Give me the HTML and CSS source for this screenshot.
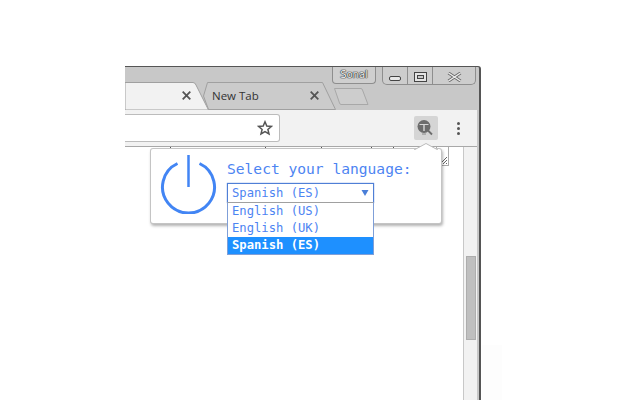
FILE: index.html
```html
<!DOCTYPE html>
<html lang="en">
<head>
<meta charset="utf-8">
<title>Select your language</title>
<link rel="stylesheet" href="styles.css">
</head>
<body>
<div class="patch"></div>
<div class="window">
  <div class="tabstrip">
    <svg class="tab-shapes" width="356" height="44" viewBox="0 0 356 44">
      <path class="tab-inactive" d="M78.500 30 L82.500 16.500 H197.500 L210.500 43.500 H83.500 Z"/>
      <path class="tab-active" d="M0 16.500 H68 Q70 16.500 71 19 L83.500 44 H0 Z"/>
      <path class="tab-new" d="M209.500 22.500 H236 Q237 22.500 237.500 24 L243 38.500 H216 Q215 38.500 214.500 37 Z"/>
    </svg>
    <div class="tab tab-first">
      <svg class="tab-close" width="9" height="9" viewBox="0 0 9 9"><path d="M.7 .7 L8.300 8.300 M8.300 .7 L.7 8.300"/></svg>
    </div>
    <div class="tab tab-second">
      <span class="tab-title">New Tab</span>
      <svg class="tab-close" width="9" height="9" viewBox="0 0 9 9"><path d="M.7 .7 L8.300 8.300 M8.300 .7 L.7 8.300"/></svg>
    </div>
    <div class="caption">
      <div class="profile">Sonal</div>
      <div class="controls">
        <div class="control">
          <svg width="14" height="6" viewBox="0 0 14 6"><rect x="1.500" y=".5" width="11" height="4" rx="1.500" fill="#e8e8e8" stroke="#444"/></svg>
        </div>
        <div class="control">
          <svg class="max-icon" width="13" height="10" viewBox="0 0 13 10"><rect x=".5" y=".5" width="12" height="9" fill="#e4e4e4" stroke="#444"/><rect x="3.500" y="3.500" width="6" height="3" fill="#c8c8c8" stroke="#444"/></svg>
        </div>
        <div class="control control-close">
          <svg width="15" height="10" viewBox="0 0 15 10"><path d="M1.500 1 L13.500 9 M13.500 1 L1.500 9" stroke="#666" stroke-width="3" fill="none"/><path d="M1.500 1 L13.500 9 M13.500 1 L1.500 9" stroke="#eee" stroke-width="1.500" fill="none"/></svg>
        </div>
      </div>
    </div>
  </div>
  <div class="toolbar">
    <div class="omnibox">
      <svg class="star" width="16" height="16" viewBox="0 0 16 16"><path d="M8 1.800 L9.800 6 L14.400 6.400 L10.900 9.400 L12 13.900 L8 11.500 L4 13.900 L5.100 9.400 L1.600 6.400 L6.200 6 Z"/></svg>
    </div>
    <div class="ext-button">
      <svg width="20" height="20" viewBox="0 0 20 20">
        <circle cx="8" cy="8.500" r="6.500" fill="#6c6c6c"/>
        <path d="M3.500 6 H12.500 V7 H8.700 V13 H7.300 V7 H3.500 Z" fill="#d6d6d6"/>
        <path d="M12 12.500 L16 16.500" stroke="#6c6c6c" stroke-width="1.800"/>
        <path d="M6 16 H10" stroke="#888" stroke-width="1"/>
      </svg>
    </div>
    <div class="menu-dots"><i></i><i></i><i></i></div>
  </div>
  <div class="page">
    <div class="ticks"><i></i><i></i><i></i><i></i><i></i></div>
    <div class="textarea-corner">
      <svg width="9" height="9" viewBox="0 0 9 9"><path d="M1 8 L8 1 M4 8 L8 4 M7 8 L8 7" stroke="#666" fill="none"/></svg>
    </div>
    <div class="scrollbar"><div class="thumb"></div></div>
  </div>
</div>
<div class="popup">
  <svg class="popup-arrow" width="24" height="7" viewBox="0 0 24 7"><path d="M0 7 L12 .5 L24 7" fill="#fff" stroke="#bbb"/></svg>
  <svg class="power" width="60" height="64" viewBox="0 0 60 64">
    <path d="M18.500 13.500 A26 26 0 1 0 40.500 13.500" fill="none" stroke="#4285f4" stroke-width="3"/>
    <path d="M29.500 5 V37" fill="none" stroke="#4285f4" stroke-width="2.500"/>
  </svg>
  <div class="picker">
    <div class="picker-label">Select your language:</div>
    <div class="select">
      <span>Spanish (ES)</span>
      <svg width="8" height="6" viewBox="0 0 8 6"><path d="M.5 0 H7.500 L4 6 Z" fill="#4a7fd8"/></svg>
      <ul class="options">
        <li>English (US)</li>
        <li>English (UK)</li>
        <li class="selected">Spanish (ES)</li>
      </ul>
    </div>
  </div>
</div>
</body>
</html>
```

FILE: styles.css
```css
html, body {
  margin: 0;
  height: 400px;
  overflow: hidden;
  background: #fff;
}

.patch {
  position: absolute;
  left: 482px;
  top: 345px;
  width: 20px;
  height: 55px;
  background: #fdfdfd;
}

.window {
  position: absolute;
  left: 125px;
  top: 66px;
  width: 353px;
  height: 334px;
  display: flex;
  flex-direction: column;
  background: #c8c8c8;
  border-top: 1px solid #555;
  border-right: 2px solid #555;
  border-top-right-radius: 3px;
  padding-right: 1px;
}

.tabstrip {
  position: relative;
  height: 43px;
  display: flex;
  flex: none;
}

.tab-shapes {
  position: absolute;
  left: 0;
  top: -1px;
}

.tab-active { fill: #f2f2f2; stroke: #a0a0a0; stroke-width: 1; }
.tab-inactive { fill: #cbcbcb; stroke: #a0a0a0; stroke-width: 1; }
.tab-new { fill: #cdcdcd; stroke: #a8a8a8; stroke-width: 1; }

.tab {
  position: relative;
  flex: none;
  height: 27px;
  margin-top: 15px;
  display: flex;
  align-items: center;
  justify-content: flex-end;
  font-family: "Open Sans", sans-serif;
  font-size: 11.500px;
  color: #333;
}

.tab-first { width: 66px; }

.tab-second {
  width: 107px;
  margin-left: 21px;
  justify-content: space-between;
}

.tab-close {
  display: block;
  fill: none;
  stroke: #555;
  stroke-width: 1.800;
}

.caption {
  position: relative;
  margin-left: auto;
  display: flex;
  align-items: flex-start;
  gap: 6px;
  margin-right: 2px;
}

.profile {
  width: 42px;
  height: 16px;
  border: 1px solid #8e8e8e;
  border-top: 0;
  border-radius: 0 0 4px 4px;
  background: #cfcfcf;
  font-family: "DejaVu Sans", sans-serif;
  font-size: 10px;
  line-height: 15px;
  text-align: center;
  color: #eee;
  text-shadow: 0 0 1px #222, 0 0 1px #222, 0 0 1px #222;
}

.controls {
  display: flex;
  height: 17px;
  border: 1px solid #8e8e8e;
  border-top: 0;
  border-radius: 0 0 5px 5px;
  background: #cdcdcd;
}

.control {
  width: 24px;
  display: flex;
  align-items: center;
  justify-content: center;
  border-right: 1px solid #8e8e8e;
}

.control svg {
  display: block;
  margin-top: 7px;
}

.control .max-icon { margin-top: 3px; }
.control-close svg { margin-top: 3px; }

.control-close {
  width: 42px;
  border-right: 0;
}

.toolbar {
  position: relative;
  height: 37px;
  flex: none;
  display: flex;
  align-items: flex-start;
  background: #f2f2f2;
  border-bottom: 1px solid #a8a8a8;
  box-sizing: border-box;
  margin-right: 1px;
}

.omnibox {
  width: 155px;
  height: 28px;
  margin-top: 4px;
  display: flex;
  align-items: center;
  justify-content: flex-end;
  box-sizing: border-box;
  padding-right: 6px;
  background: #fff;
  border: 1px solid #bcbcbc;
  border-left: 0;
  border-radius: 0 3px 3px 0;
}

.star path {
  fill: none;
  stroke: #555;
  stroke-width: 1.500;
}

.ext-button {
  width: 24px;
  height: 24px;
  margin: 6px 0 0 134px;
  display: flex;
  align-items: center;
  justify-content: center;
  background: #d5d5d5;
  border-radius: 2px;
}

.menu-dots {
  margin: 12px 0 0 19px;
  display: flex;
  flex-direction: column;
  gap: 2px;
}

.menu-dots i {
  display: block;
  width: 3px;
  height: 3px;
  border-radius: 50%;
  background: #555;
}

.page {
  position: relative;
  flex: 1;
  display: flex;
  justify-content: flex-end;
  background: #fff;
  margin-right: 1px;
}

.ticks i {
  position: absolute;
  top: 0;
  width: 1px;
  height: 2px;
  background: #555;
}

.ticks i:nth-child(1) { left: 45px; }
.ticks i:nth-child(2) { left: 140px; }
.ticks i:nth-child(3) { left: 196px; }
.ticks i:nth-child(4) { left: 246px; }
.ticks i:nth-child(5) { left: 268px; }

.textarea-corner {
  position: absolute;
  left: 311px;
  top: 0;
  width: 13px;
  height: 19px;
  box-sizing: border-box;
  border: 1px solid #aaa;
  border-top: 0;
  display: flex;
  align-items: flex-end;
  justify-content: flex-end;
}

.textarea-corner svg { display: block; }

.scrollbar {
  width: 14px;
  box-sizing: border-box;
  padding-left: 2px;
  background: #f2f2f2;
  border-left: 1px solid #c8c8c8;
}

.thumb {
  width: 10px;
  height: 84px;
  margin-top: 109px;
  box-sizing: border-box;
  background: #bfbfbf;
  border: 1px solid #adadad;
}

.popup {
  position: absolute;
  left: 151px;
  top: 149px;
  width: 290px;
  height: 74px;
  box-sizing: border-box;
  display: flex;
  align-items: flex-start;
  padding: 1px 0 0 8px;
  background: #fff;
  border-radius: 2px;
  box-shadow: 0 0 0 1px #c4c4c4, 1px 2px 3px 1px rgba(0, 0, 0, .3);
}

.popup-arrow {
  position: absolute;
  right: 3px;
  top: -6px;
}

.power {
  display: block;
  flex: none;
}

.picker {
  margin-left: 8px;
  font-family: "DejaVu Sans Mono", monospace;
  color: #4d84f2;
}

.picker-label {
  margin-top: 10px;
  font-size: 14.600px;
  line-height: 18px;
  white-space: nowrap;
}

.select {
  position: relative;
  width: 147px;
  height: 20px;
  margin-top: 5px;
  box-sizing: border-box;
  display: flex;
  align-items: center;
  justify-content: space-between;
  padding: 0 4px;
  border: 1px solid #4f7fd6;
  box-shadow: 0 0 1px 0 #4f7fd6;
  font-size: 12.200px;
  background: #fff;
}

.options {
  position: absolute;
  left: -1px;
  top: 18px;
  width: 147px;
  box-sizing: border-box;
  margin: 0;
  padding: 0;
  list-style: none;
  background: #fff;
  border: 1px solid #7f9fd8;
  border-top-color: #a0a0a0;
}

.options li {
  height: 17px;
  line-height: 17px;
  padding-left: 4px;
}

.options .selected {
  background: #1e90ff;
  color: #fff;
  font-weight: bold;
}
```
